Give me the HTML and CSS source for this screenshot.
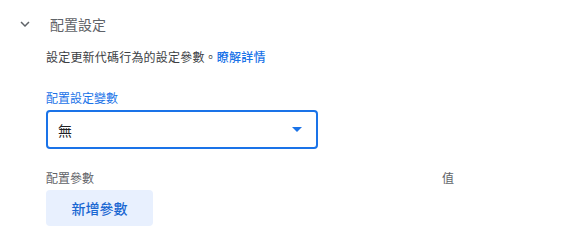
FILE: index.html
```html
<!DOCTYPE html>
<html lang="zh-TW">
<head>
    <meta charset="UTF-8">
    <title>配置設定</title>
    <link rel="stylesheet" href="styles.css">
</head>
<body>
<div class="section">
    <div class="section-header">
        <svg class="chevron" width="18" height="18" viewBox="0 0 24 24"><path d="M7.41 8.59 12 13.17l4.59-4.58L18 10l-6 6-6-6z" fill="#5f6368"/></svg>
        <span class="section-title">配置設定</span>
    </div>

    <div class="section-body">
        <p class="desc">設定更新代碼行為的設定參數。<a href="#">瞭解詳情</a></p>

        <label class="field-label">配置設定變數</label>
        <div class="select-box">
            <span>無</span>
            <span class="arrow"></span>
        </div>

        <div class="param-head">
            <span>配置參數</span>
            <span class="value-col">值</span>
        </div>
        <button class="add-btn">新增參數</button>
    </div>
</div>
</body>
</html>
```

FILE: styles.css
```css
body {
    margin: 0;
    background: #ffffff;
    font-family: Roboto, "Noto Sans CJK TC", sans-serif;
    color: #3c4043;
}

.section {
    padding: 12px 0 0 16px;
}

.section-header {
    display: flex;
    align-items: center;
    height: 24px;
}

.chevron {
    display: block;
}

.section-title {
    margin-left: 16px;
    font-size: 14px;
    color: #5f6368;
}

.section-body {
    padding-left: 30px;
}

.desc {
    margin: 13px 0 0;
    font-size: 12px;
    line-height: 18px;
    letter-spacing: 0.2px;
    color: #3c4043;
}

.desc a {
    color: #1a73e8;
    text-decoration: none;
    font-weight: 500;
}

.field-label {
    display: block;
    margin-top: 23px;
    font-size: 12px;
    line-height: 18px;
    color: #1a73e8;
}

.select-box {
    box-sizing: border-box;
    width: 272px;
    height: 39px;
    margin-top: 2px;
    padding: 0 14px 0 10px;
    border: 2px solid #1a73e8;
    border-radius: 4px;
    display: flex;
    align-items: center;
    justify-content: space-between;
    font-size: 14px;
    color: #202124;
}

.arrow {
    width: 0;
    height: 0;
    border-left: 5px solid transparent;
    border-right: 5px solid transparent;
    border-top: 5px solid #1a73e8;
}

.param-head {
    display: flex;
    margin-top: 21px;
    font-size: 12px;
    line-height: 18px;
    color: #5f6368;
}

.value-col {
    margin-left: 348px;
}

.add-btn {
    display: block;
    width: 107px;
    height: 36px;
    margin-top: 2px;
    border: none;
    border-radius: 4px;
    background: #e8f0fe;
    color: #1967d2;
    font-family: inherit;
    font-size: 14px;
    font-weight: 500;
    cursor: pointer;
}
```
